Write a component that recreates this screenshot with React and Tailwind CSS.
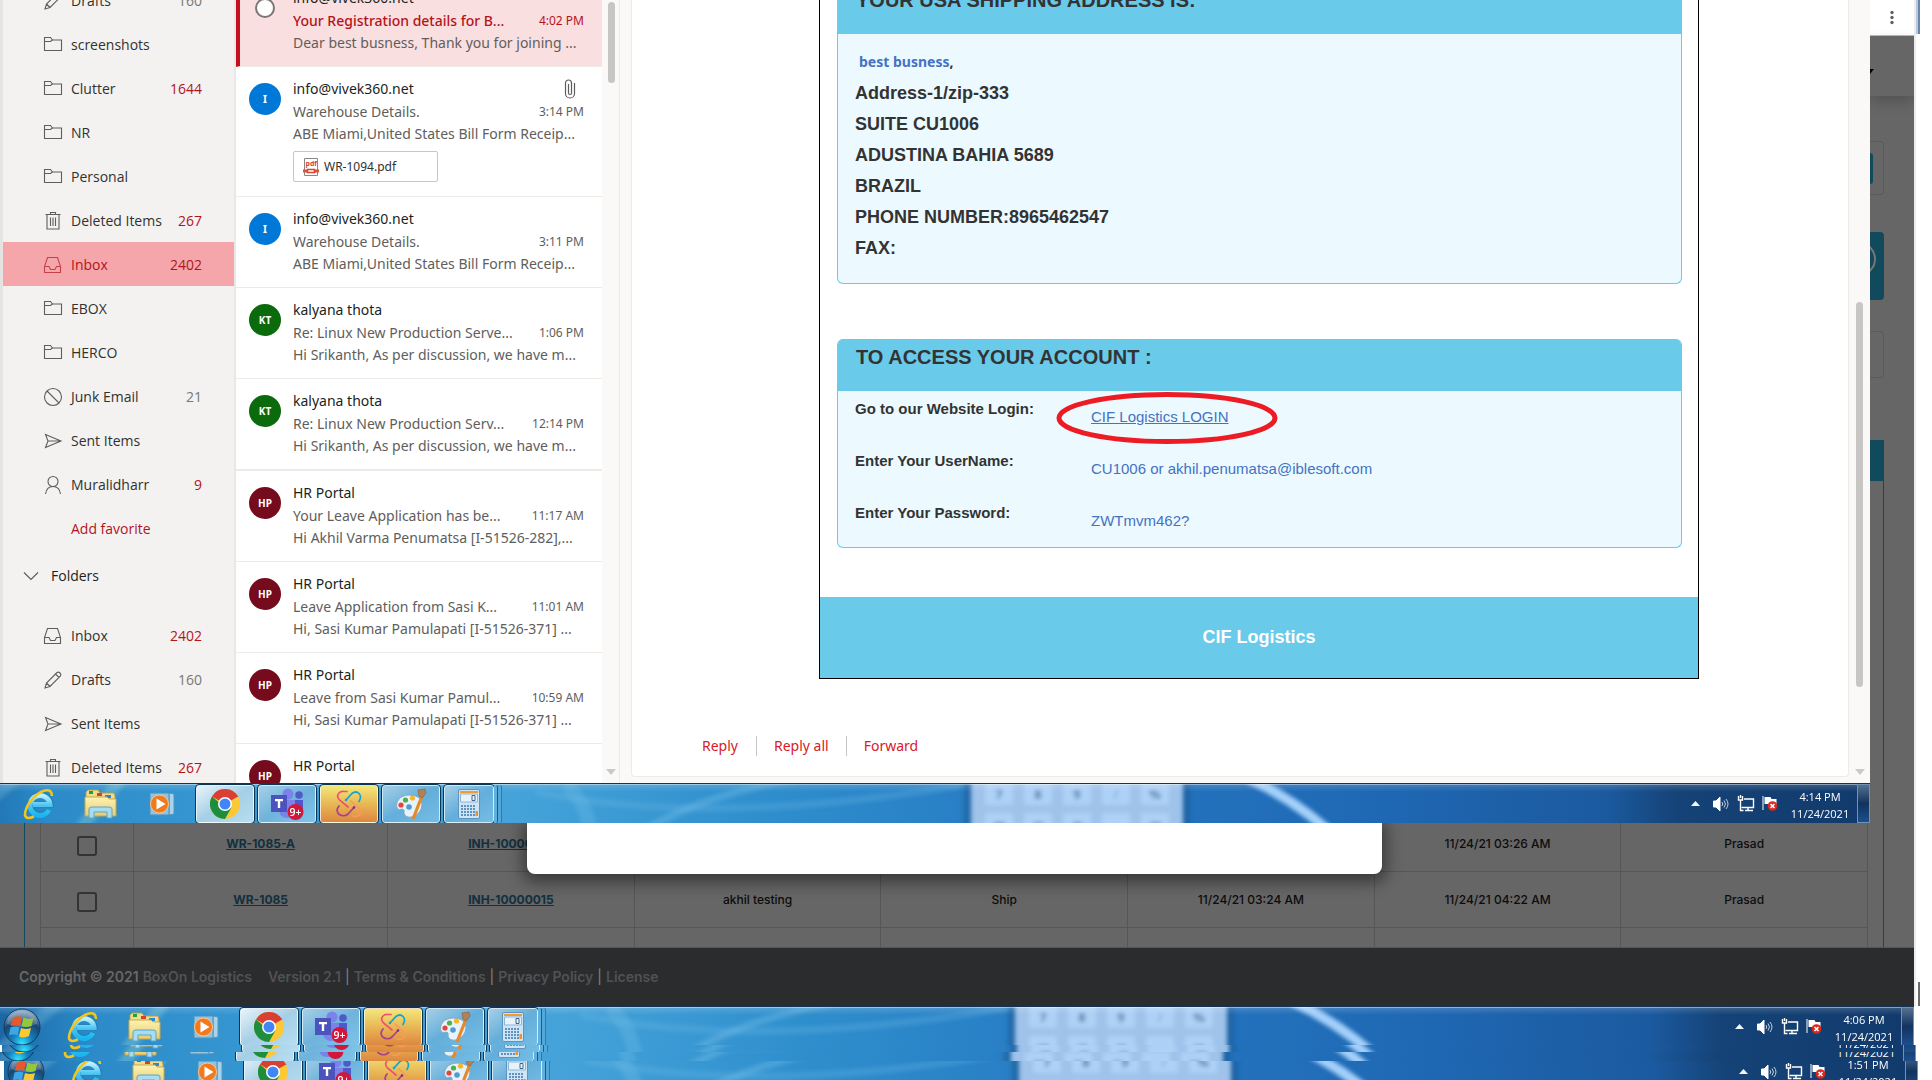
import React from "react";

const UI = "font-['Open_Sans','Noto_Sans',sans-serif]";
const NOTO = "font-['Noto_Sans','Open_Sans',sans-serif]";
const ARIAL = "font-['Liberation_Sans',Arial,sans-serif]";
const GEO = "font-['Inter',sans-serif]";

/* ---------- mailbox icons ---------- */

const line = {
  width: 20,
  height: 20,
  viewBox: "0 0 20 20",
  fill: "none",
  stroke: "currentColor",
  strokeWidth: 1.1,
};

const icons = {
  folder: (
    <svg {...line}>
      <path d="M1.500 15.500V2.500h6l2 2.500h9v10.500z" />
      <path d="M1.500 6.500h6l2-1.500" />
    </svg>
  ),
  pencil: (
    <svg {...line}>
      <path d="M2 18l1.500-5L14 2.500q1.500-1 3 .5t.5 3L7 16.500z M3.500 13l3.500 3.500 M12.500 4l3.500 3.500" />
    </svg>
  ),
  trash: (
    <svg {...line}>
      <path d="M2.500 3.500h15M7.500 3.500v-2h5v2M4 3.500v14.500h12V3.500" />
      <path d="M7.500 6.500v8.500M10 6.500v8.500M12.500 6.500v8.500" />
    </svg>
  ),
  inbox: (
    <svg {...line}>
      <path d="M1.500 17.500v-6l3-9h10l3 9v6z" />
      <path d="M1.500 11.500h4.500l1.500 3h4.500l1.500-3h4" />
    </svg>
  ),
  junk: (
    <svg {...line}>
      <circle cx="10" cy="10" r="8.500" />
      <path d="M4 4l12 12" />
    </svg>
  ),
  sent: (
    <svg {...line}>
      <path d="M2.500 3.500L18 10 2.500 16.500 5 10z M5 10h13" />
    </svg>
  ),
  person: (
    <svg {...line}>
      <circle cx="10" cy="6.500" r="5" />
      <path d="M2.500 19q1-7.500 7.500-7.500t7.500 7.500" />
    </svg>
  ),
};

const favorites = [
  { icon: "pencil", name: "Drafts", count: "160" },
  { icon: "folder", name: "screenshots" },
  { icon: "folder", name: "Clutter", count: "1644", hot: true },
  { icon: "folder", name: "NR" },
  { icon: "folder", name: "Personal" },
  { icon: "trash", name: "Deleted Items", count: "267", hot: true },
  { icon: "inbox", name: "Inbox", count: "2402", hot: true, active: true },
  { icon: "folder", name: "EBOX" },
  { icon: "folder", name: "HERCO" },
  { icon: "junk", name: "Junk Email", count: "21" },
  { icon: "sent", name: "Sent Items" },
  { icon: "person", name: "Muralidharr", count: "9", hot: true },
];

const folders = [
  { icon: "inbox", name: "Inbox", count: "2402", hot: true },
  { icon: "pencil", name: "Drafts", count: "160" },
  { icon: "sent", name: "Sent Items" },
  { icon: "trash", name: "Deleted Items", count: "267", hot: true },
];

function FolderRow({ icon, name, count, hot, active }) {
  return (
    <button
      type="button"
      className={
        "flex h-11 w-full shrink-0 items-center pt-px pl-10 pr-8 text-left text-sm " +
        (active ? "bg-[#f4a6aa] text-[#b3131b]" : "text-[#323130]")
      }
    >
      <span className={active ? "text-[#c4434a]" : "text-[#605e5c]"}>{icons[icon]}</span>
      <span className="ml-2 flex-1 whitespace-nowrap">{name}</span>
      {count && <span className={hot ? "text-[#b3131b]" : "text-[#797775]"}>{count}</span>}
    </button>
  );
}

function Sidebar() {
  return (
    <nav className="flex w-[236px] shrink-0 flex-col overflow-hidden border-l-3 border-r-2 border-l-[#e6e4e2] border-r-[#eae8e6] bg-[#f3f2f1]">
      <div className="-mt-[22px] flex flex-col">
        {favorites.map((f) => (
          <FolderRow key={f.name} {...f} />
        ))}
        <button type="button" className="h-11 pt-px pl-[68px] text-left text-sm text-[#b3131b]">
          Add favorite
        </button>
        <button type="button" className="mb-3 flex h-[51px] items-center gap-3 pl-5 text-left text-sm text-[#201f1e]">
          <svg width="16" height="16" viewBox="0 0 16 16" fill="none" stroke="#605e5c" strokeWidth="1.2">
            <path d="M1 4.500l7 7 7-7" />
          </svg>
          Folders
        </button>
        {folders.map((f) => (
          <FolderRow key={f.name} {...f} />
        ))}
      </div>
    </nav>
  );
}

/* ---------- message list ---------- */

const messages = [
  { who: "info@vivek360.net", subject: "Your Registration details for B...", time: "4:02 PM", body: "Dear best busness, Thank you for joining ...", selected: true },
  { who: "info@vivek360.net", subject: "Warehouse Details.", time: "3:14 PM", body: "ABE Miami,United States Bill Form Receip...", initials: "I", color: "bg-[#0078d7]", file: "WR-1094.pdf" },
  { who: "info@vivek360.net", subject: "Warehouse Details.", time: "3:11 PM", body: "ABE Miami,United States Bill Form Receip...", initials: "I", color: "bg-[#0078d7]" },
  { who: "kalyana thota", subject: "Re: Linux New Production Serve...", time: "1:06 PM", body: "Hi Srikanth, As per discussion, we have m...", initials: "KT", color: "bg-[#0b6a0b]" },
  { who: "kalyana thota", subject: "Re: Linux New Production Serv...", time: "12:14 PM", body: "Hi Srikanth, As per discussion, we have m...", initials: "KT", color: "bg-[#0b6a0b]", last: true },
  { who: "HR Portal", subject: "Your Leave Application has be...", time: "11:17 AM", body: "Hi Akhil Varma Penumatsa [I-51526-282],...", initials: "HP", color: "bg-[#750b1c]" },
  { who: "HR Portal", subject: "Leave Application from Sasi K...", time: "11:01 AM", body: "Hi, Sasi Kumar Pamulapati [I-51526-371] ...", initials: "HP", color: "bg-[#750b1c]" },
  { who: "HR Portal", subject: "Leave from Sasi Kumar Pamul...", time: "10:59 AM", body: "Hi, Sasi Kumar Pamulapati [I-51526-371] ...", initials: "HP", color: "bg-[#750b1c]" },
  { who: "HR Portal", initials: "HP", color: "bg-[#750b1c]" },
];

function Message({ who, subject, time, body, initials, color, file, selected, last }) {
  return (
    <article
      className={
        "flex shrink-0 border-[#edebe9] pr-[18px] " +
        (last ? "border-b-2 " : "border-b ") +
        (selected ? "border-l-4 border-l-[#c50f1f] bg-[#fadfe0] pl-[9px]" : "bg-white pl-[13px]")
      }
    >
      {selected ? (
        <span className="ml-[6px] mt-[22px] mr-[6px] size-5 shrink-0 rounded-full border-2 border-[#797775] bg-white" />
      ) : (
        <span
          className={
            "mt-4 grid size-8 shrink-0 place-items-center rounded-full text-[10px] font-bold text-white " + color
          }
        >
          {initials}
        </span>
      )}
      <div className={"ml-3 min-w-0 flex-1 whitespace-nowrap pt-3 " + (file ? "pb-[14px]" : "pb-3")}>
        <div className="flex h-5 items-center justify-between text-sm text-[#201f1e]">
          <span>{who}</span>
          {file && (
            <svg className="mr-2" width="12" height="20" viewBox="0 0 12 20" fill="none" stroke="#605e5c" strokeWidth="1.2">
              <path d="M10.500 4v10.500a4.500 4.500 0 0 1-9 0V4a3 3 0 0 1 6 0v10a1.500 1.500 0 0 1-3 0V5" />
            </svg>
          )}
        </div>
        <div className={"mt-0.5 flex h-[22px] items-center justify-between text-sm " + (selected ? "text-[#b3131b]" : "text-[#605e5c]")}>
          <span className={selected ? "font-medium" : ""}>{subject}</span>
          <span className="text-xs">{time}</span>
        </div>
        <div className="flex h-[22px] items-center text-sm text-[#605e5c]">{body}</div>
        {file && (
          <button type="button" className="mt-[6px] flex h-[31px] w-[145px] items-center gap-1 rounded-xs border border-[#c8c6c4] pl-2 text-xs text-[#323130]">
            <svg width="18" height="20" viewBox="0 0 18 20" fill="none">
              <path d="M2.500 1.500h13v17h-13z" fill="#fff" stroke="#8a8886" />
              <text x="3.500" y="9" fontSize="7" fontWeight="700" fill="#d8452e">pdf</text>
              <path d="M1 12.500h4v3H1zM13 12.500h4v3h-4z" fill="#d8563e" />
              <path d="M5.500 12.500h7v3h-7z" fill="#fff" stroke="#d8452e" strokeWidth="1.500" />
            </svg>
            {file}
          </button>
        )}
      </div>
    </article>
  );
}

function ScrollArrow() {
  return (
    <svg width="10" height="6" viewBox="0 0 10 6">
      <path d="M0 0h10L5 6z" fill="#c6cacd" />
    </svg>
  );
}

function MessageList() {
  return (
    <>
      <section className={"w-[366px] shrink-0 overflow-hidden bg-white " + NOTO}>
        <div className="-mt-[24px] flex flex-col">
          {messages.map((m, i) => (
            <Message key={i} {...m} />
          ))}
        </div>
      </section>
      <div className="flex w-[18px] shrink-0 flex-col items-center justify-between border-r border-[#edebe9] bg-[#faf9f8] pb-2 pl-px pt-[2px]">
        <div className="h-[81px] w-[7px] rounded-full bg-[#c8c6c4]" />
        <ScrollArrow />
      </div>
    </>
  );
}

/* ---------- reading pane ---------- */

const credentials = [
  ["Enter Your UserName:", "CU1006 or akhil.penumatsa@iblesoft.com"],
  ["Enter Your Password:", "ZWTmvm462?"],
];

function CardTitle({ children }) {
  return <h2 className="h-[52px] bg-[#6acaea] pl-[18px] pt-[6px] text-xl leading-6 font-bold text-[#333]">{children}</h2>;
}

function ReadingPane() {
  return (
    <section className="flex min-w-0 flex-1 bg-[#faf9f8] pl-[11px]">
      <div className="mb-[6px] min-w-0 flex-1 overflow-hidden rounded-b-sm border border-t-0 border-[#edebe9] bg-white">
        <div className={"ml-[187px] mr-[149px] border border-t-0 border-black " + ARIAL}>
          <div className="mr-4 ml-[17px] -mt-[18px] overflow-hidden rounded-md border border-t-0 border-[#6acaea] bg-[#ecfaff]">
            <CardTitle>YOUR USA SHIPPING ADDRESS IS:</CardTitle>
            <div className="px-[17px] pb-[19px] pt-3 text-lg leading-[31px] font-bold text-[#333]">
              <p className={"pl-1 text-sm leading-8 text-[#4472c4] " + NOTO}>
                best busness<span className="text-[#333]">,</span>
              </p>
              <p>Address-1/zip-333</p>
              <p>SUITE CU1006</p>
              <p>ADUSTINA BAHIA 5689</p>
              <p>BRAZIL</p>
              <p>PHONE NUMBER:8965462547</p>
              <p>FAX:</p>
            </div>
          </div>
          <div className="mr-4 ml-[17px] mt-[55px] overflow-hidden rounded-md border border-t-0 border-[#6acaea] bg-[#ecfaff]">
            <CardTitle>TO ACCESS YOUR ACCOUNT :</CardTitle>
            <dl className="grid grid-cols-[236px_1fr] pl-[17px] text-[15px] leading-6">
              <dt className="h-[52px] pt-[6px] font-bold text-[#333]">Go to our Website Login:</dt>
              <dd className="relative pt-[14px] text-[#4472c4]">
                <a href="#login" className="underline">CIF Logistics LOGIN</a>
                <svg className="absolute -left-[35px] top-px" width="222" height="52" viewBox="0 0 222 52" fill="none">
                  <ellipse cx="111" cy="26" rx="108" ry="23.500" stroke="#ed1c24" strokeWidth="5" />
                </svg>
              </dd>
              {credentials.map(([k, v]) => (
                <React.Fragment key={k}>
                  <dt className="h-[52px] pt-[6px] font-bold text-[#333]">{k}</dt>
                  <dd className="pt-[14px] text-[#4472c4]">{v}</dd>
                </React.Fragment>
              ))}
            </dl>
          </div>
          <div className="mt-[49px] grid h-[81px] place-items-center bg-[#6acaea] pb-px text-lg font-bold text-white">CIF Logistics</div>
        </div>
        <div className={"ml-[70px] mt-[57px] flex items-center text-sm text-[#d6202a] " + NOTO}>
          <button type="button" className="pr-[18px]">Reply</button>
          <button type="button" className="border-l border-[#c8c6c4] px-[17px]">Reply all</button>
          <button type="button" className="border-l border-[#c8c6c4] px-[17px]">Forward</button>
        </div>
      </div>
      <div className="flex w-[21px] shrink-0 flex-col items-center justify-between pb-2 pt-[302px]">
        <div className="h-[385px] w-[7px] rounded-full bg-[#c8c6c4]" />
        <ScrollArrow />
      </div>
    </section>
  );
}

/* ---------- sliver of the browser behind the mail window ---------- */

function BackdropEdge() {
  return (
    <div className="flex w-11 shrink-0 flex-col overflow-hidden bg-[#666]">
      <div className="flex h-9 shrink-0 items-center justify-center border-b border-[#bbb] bg-white">
        <svg width="4" height="16" viewBox="0 0 4 16" fill="#5f6368">
          <circle cx="2" cy="2.500" r="1.700" />
          <circle cx="2" cy="7.500" r="1.700" />
          <circle cx="2" cy="12.500" r="1.700" />
        </svg>
      </div>
      <div className="h-[60px] shrink-0 pt-[33px] shadow-[0_6px_14px_rgba(0,0,0,0.18)]">
        <svg width="4" height="5" viewBox="0 0 4 5">
          <path d="M0 0h4L0 5z" fill="#000" />
        </svg>
      </div>
      <div className="mt-[45px] mr-[30px] h-[54px] shrink-0 rounded-r-sm border border-l-0 border-[#5b5b5b] pt-[11px]">
        <div className="h-[31px] w-[3px] rounded-r-sm bg-[#104a5c]" />
      </div>
      <div className="mt-[37px] mr-[30px] h-[68px] shrink-0 overflow-hidden rounded-r-sm bg-[#104a5c]">
        <svg width="14" height="68" viewBox="0 0 14 68" fill="none">
          <circle cx="-11" cy="27" r="16" stroke="#777" strokeWidth="2" />
        </svg>
      </div>
      <div className="mt-[31px] mr-[30px] h-[47px] shrink-0 rounded-r-sm border border-l-0 border-[#5b5b5b]" />
      <div className="mt-[62px] mr-[30px] h-[41px] shrink-0 bg-[#104a5c]" />
      <div className="mr-[30px] flex-1 border-r border-[#104a5c]" />
    </div>
  );
}

/* ---------- taskbar ---------- */

function Defs() {
  return (
    <svg width="0" height="0" className="absolute" aria-hidden="true">
      <defs>
        <filter id="soft" x="-10%" y="-20%" width="120%" height="140%">
          <feGaussianBlur stdDeviation="2.500" />
        </filter>
        <filter id="soft1">
          <feGaussianBlur stdDeviation="2" />
        </filter>
        <linearGradient id="paper" x1="0" y1="0" x2="0" y2="1">
          <stop offset="0" stopColor="#fdf3b4" />
          <stop offset="1" stopColor="#e9cd6b" />
        </linearGradient>
        <radialGradient id="orb" cx=".5" cy=".95" r=".95">
          <stop offset="0" stopColor="#2fe3ff" />
          <stop offset=".3" stopColor="#1580bd" />
          <stop offset=".65" stopColor="#1a4570" />
          <stop offset="1" stopColor="#9dbcd4" />
        </radialGradient>
        <linearGradient id="ie" x1="0" y1="0" x2="0" y2="1">
          <stop offset="0" stopColor="#bdf1fd" />
          <stop offset=".5" stopColor="#4cc5f0" />
          <stop offset="1" stopColor="#19b5ee" />
        </linearGradient>
      </defs>
    </svg>
  );
}

const StartOrb = () => (
  <svg width="38" height="38" viewBox="0 0 38 38">
    <circle cx="19" cy="19" r="18" fill="url(#orb)" stroke="#0f3d63" />
    <path d="M4 16a15 13 0 0 1 30 0q-15 6-30 0z" fill="#fff" opacity=".2" />
    <path d="M10 10q4-3 9-1l-2 9q-4-2-9 0z" fill="#e8582b" />
    <path d="M20.500 9.500q5 2.500 10 .5l-2 8q-5 2-10 0z" fill="#93c83d" />
    <path d="M7.500 19.500q5-2 9 0l-2 8q-4-2-8.500 0z" fill="#3ea5e6" />
    <path d="M18 20q5 2 10 0l-2 8q-5 2.500-10 .5z" fill="#fcc931" />
  </svg>
);

const IeIcon = () => (
  <svg width="32" height="34" viewBox="0 0 32 34" fill="none">
    <path d="M26 23A10 10 0 1 1 27.500 17.500H10" stroke="#2184bd" strokeWidth="6.500" />
    <path d="M26 23A10 10 0 1 1 27 17.500H10" stroke="url(#ie)" strokeWidth="5" />
    <path d="M29 9q0-7-7-5.500C12 6 2 19 2 28q1 5 9 1.500" stroke="#f3c51c" strokeWidth="2.600" />
  </svg>
);

const ExplorerIcon = () => (
  <svg width="34" height="30" viewBox="0 0 34 30">
    <path d="M2 3l2-2h10l2 3h14l1 3v19H2z" fill="#f1dc8c" stroke="#b99a48" />
    <path d="M5 2h4v3H5z" fill="#19a33b" />
    <path d="M13 4h5v3h-5z" fill="#d9402a" />
    <path d="M21 6h6v3h-6z" fill="#2c86d6" />
    <path d="M1 8h22l2 2h7v17H1z" fill="url(#paper)" stroke="#c8a850" />
    <path d="M5 29v-9q0-2 3-2h17q3 0 3 2v9h-5v-6H10v6z" fill="#a8dcf3" stroke="#5aa6cc" />
  </svg>
);

const MediaIcon = () => (
  <svg width="28" height="26" viewBox="0 0 28 26">
    <path d="M20 2l5 1v20l-5 1z" fill="#a7d3ec" stroke="#5596bf" />
    <path d="M1 2h19v22H1z" fill="#8cc4e6" stroke="#4f90b9" />
    <circle cx="10.500" cy="13" r="9" fill="#f07a1c" stroke="#ffc48a" />
    <path d="M7.500 7.500v11l9-5.500z" fill="#fff" />
  </svg>
);

const ChromeIcon = () => (
  <svg width="30" height="30" viewBox="0 0 30 30">
    <circle cx="15" cy="15" r="15" fill="#fcc934" />
    <path d="M15 15L2 7.500A15 15 0 0 1 28 7.500z" fill="#d93f35" />
    <path d="M2 7.500A15 15 0 0 0 15 30l6.500-11.500H15z" fill="#1e8e3e" />
    <path d="M15 8h13.200a15 15 0 0 0-3-4z" fill="#d93f35" />
    <circle cx="15" cy="15" r="7" fill="#fff" />
    <circle cx="15" cy="15" r="5.500" fill="#4285f4" />
  </svg>
);

const TeamsIcon = ({ plain }) => (
  <svg width="34" height="32" viewBox="0 0 34 32">
    <circle cx="18" cy="6" r="5.500" fill="#7b83eb" />
    <circle cx="29" cy="7" r="3.800" fill="#5059c9" />
    <path d="M24 12h9v10q0 4-5 5h-4z" fill="#5059c9" />
    <path d="M9 12h16v11q-1 7-8 7t-8-7z" fill="#7b83eb" />
    <path d="M1 7h16v17H1z" fill="#4b53bc" />
    <path d="M5 11h8v2.200H10.200V20H7.800v-6.800H5z" fill="#fff" />
    <circle cx="25.500" cy="24" r="8" fill="#d0173c" />
    {!plain && (
      <text x="25.500" y="28" fontSize="10.500" fontWeight="600" fill="#fff" textAnchor="middle" fontFamily="Open Sans">9+</text>
    )}
  </svg>
);

const LoopIcon = () => (
  <svg width="28" height="28" viewBox="0 0 28 28" fill="none" strokeWidth="1.700" strokeLinecap="round">
    <path d="M13 17L4.500 10Q1 6 4 3q2-2 5-1.500h3" stroke="#f0506e" />
    <path d="M11 10l6-6.500q4-3 7 0 3 3 0 8" stroke="#12a5cf" />
    <path d="M19 17.500l-6 6.500q-4 3.500-9.500 0-3-4 .5-8" stroke="#a3418c" />
    <path d="M16 11l7.500 7q4 4 1 7-2 2-7 1" stroke="#f79a5b" />
    <circle cx="11" cy="10" r="1.300" fill="#12a5cf" />
    <circle cx="19" cy="17.500" r="1.300" fill="#7c2f86" />
  </svg>
);

const PaintIcon = () => (
  <svg width="34" height="32" viewBox="0 0 34 32">
    <path d="M15 7C6 7 1 14 3 20q2 3 5 1 3 0 2 4 1 5 8 4 9-3 10-12Q28 7 15 7z" fill="#e8f2fa" stroke="#84a9c6" />
    <circle cx="7" cy="17" r="2.600" fill="#e2453a" />
    <circle cx="11.500" cy="12" r="2.600" fill="#4fb04a" />
    <circle cx="18.500" cy="10" r="2.600" fill="#f6b72b" />
    <circle cx="15" cy="19" r="2.800" fill="#4d9cd2" />
    <path d="M28 8L19 31" stroke="#e58a2b" strokeWidth="3.200" />
    <path d="M24 2l7-1 1 4-4 5-3-2z" fill="#b48156" stroke="#8a5c38" strokeWidth=".6" />
  </svg>
);

const CalculatorIcon = () => (
  <svg width="22" height="30" viewBox="0 0 22 30">
    <rect x=".5" y=".5" width="21" height="29" rx="1.500" fill="#cfe4f5" stroke="#5b93c2" />
    <path d="M2 2h18v2H2z" fill="#f29a2e" />
    <path d="M2.500 5h17v8h-17z" fill="#e7f2fa" stroke="#8fb5d3" />
    <path d="M14 6.500h3v5h-3z" fill="none" stroke="#3c678c" />
    {[16, 19, 22, 25].map((y) =>
      [3, 6, 9, 12, 15].map((x) => <rect key={x + "-" + y} x={x} y={y} width="2" height="2" fill="#5e93bf" />)
    )}
    <rect x="17.500" y="22" width="2.500" height="5" fill="#f0902a" />
  </svg>
);

function Wallpaper({ plain }) {
  return (
    <svg className="absolute inset-0" width="1420" height="40" viewBox="0 0 1420 40" fill="none" aria-hidden="true">
      <g filter="url(#soft1)">
        <path d="M60 -5L-10 50" stroke="#9dd2ef" strokeWidth="12" opacity=".25" />
        <path d="M165 -5L120 50" stroke="#a6e0d8" strokeWidth="12" opacity=".3" />
        <path d="M610 0q20 20 24 44" stroke="#8fd0ef" strokeWidth="14" opacity=".2" />
        <path d="M580 8q180 36 430-8" stroke="#6fbce6" strokeWidth="7" opacity=".28" />
        <path d="M690 45q60-35 150-50" stroke="#8fd0f2" strokeWidth="7" opacity=".28" />
      </g>
      <rect x="1008" y="-10" width="226" height="60" fill="#1d5a94" opacity=".6" filter="url(#soft)" />
      <rect x="1015" y="-10" width="212" height="60" rx="3" fill="#9fc3ea" filter="url(#soft1)" />
      <g filter="url(#soft1)">
        {[1029, 1068, 1107, 1146, 1185].map((x) => (
          <g key={x} fill="#aed1f6">
            <rect x={x} y="-4" width="28" height="25" rx="2" />
            <rect x={x} y="29" width="28" height="20" rx="2" />
          </g>
        ))}
        {!plain && (
          <g fill="#4c74a6" fontSize="13" fontWeight="700" fontFamily="Open Sans" textAnchor="middle">
            <text x="1043" y="15">7</text>
            <text x="1082" y="15">8</text>
            <text x="1121" y="15">9</text>
            <text x="1160" y="15" opacity=".4">/</text>
            <text x="1199" y="15">%</text>
          </g>
        )}
        <path d="M1038 40h11M1078 40h9M1117 40h9M1194 40h11" stroke="#6f97c6" strokeWidth="4" />
        <path d="M1292 -6Q1335 14 1372 46" stroke="#a4d0fa" strokeWidth="10" />
      </g>
    </svg>
  );
}

function TaskButton({ label, tone, children }) {
  return (
    <button
      type="button"
      aria-label={label}
      className={
        "grid h-[38px] w-[58px] place-items-center rounded-[3px] border border-white/70 outline outline-[#0c3553] " + tone
      }
    >
      {children}
    </button>
  );
}

function Tray({ time, plain }) {
  return (
    <div className="relative ml-auto flex h-full items-center">
      <svg width="9" height="5" viewBox="0 0 9 5">
        <path d="M0 5l4.500-5L9 5z" fill="#f3f6fa" />
      </svg>
      <svg className="ml-[13px]" width="16" height="16" viewBox="0 0 16 16" fill="none" stroke="#fff">
        <path d="M.500 5v6h2.500l4 4V1L3 5z" fill="#fff" />
        <path d="M9 6q1.500 2 0 4M11 4.500q3 3.500 0 7M13 3q4 5 0 10" strokeWidth="1" opacity=".75" />
      </svg>
      <svg className="ml-2" width="18" height="17" viewBox="0 0 18 17" fill="none" stroke="#fff" strokeWidth="1.400">
        <path d="M7 4h9.500v8.500h-12" />
        <path d="M1.500 1v4h4V1M3.500 0v3M3.500 5v10.500h3M8 15.500h8M11 13v2" />
      </svg>
      <svg className="ml-[7px]" width="16" height="17" viewBox="0 0 16 17">
        <path d="M.500 1h1v14h-1z" fill="#fff" />
        <path d="M2.500 2h6l1 2h5v6h-6l-1-1h-5z" fill="#fff" />
        <circle cx="10.500" cy="11" r="4.800" fill="#d9281e" />
        <path d="M8.500 9l4 4M12.500 9l-4 4" stroke="#fff" strokeWidth="1.600" />
      </svg>
      <div className="ml-[11px] flex h-full w-[62px] flex-col pt-1 text-center text-[11px] leading-[17px] text-white">
        {!plain && <span>{time}</span>}
        <span className={plain ? "mt-[17px]" : ""}>11/24/2021</span>
      </div>
      <button
        type="button"
        aria-label="Show desktop"
        className="ml-[6px] h-[39px] w-[13px] self-start border border-[#6d93bb] bg-linear-to-b from-[#56718f] via-[#12335f] to-[#1d4f8c]"
      />
    </div>
  );
}

function Taskbar({ time, plain, className = "" }) {
  return (
    <div
      className={
        "relative flex h-10 items-center overflow-hidden border-t border-[#123456] bg-[linear-gradient(90deg,#1a68a6_0px,#2c8ac8_90px,#3597d2_250px,#45a3d9_560px,#2f8fcd_800px,#2678c2_1100px,#1f68b4_1420px,#1b5a9f_1650px,#154377_1720px,#123a6c_1914px)] " +
        UI + " " + className
      }
    >
      <Wallpaper plain={plain} />
      <div className="absolute inset-x-0 top-0 h-2 border-t border-white/50 bg-linear-to-b from-white/15 to-transparent" />
      <div className="relative flex h-full items-center">
        <button type="button" aria-label="Start" className="mr-2 grid w-11 place-items-center"><StartOrb /></button>
        <button type="button" aria-label="Internet Explorer" className="grid w-[62px] place-items-center"><IeIcon /></button>
        <button type="button" aria-label="Explorer" className="grid w-[62px] place-items-center"><ExplorerIcon /></button>
        <button type="button" aria-label="Media Player" className="mr-[2px] grid w-[62px] place-items-center"><MediaIcon /></button>
        <div className="flex gap-1">
          <TaskButton label="Chrome" tone="bg-linear-to-br from-[#e9f4fa] via-[#a5cfe6] to-[#b7def1]"><ChromeIcon /></TaskButton>
          <TaskButton label="Teams" tone="bg-linear-to-br from-[#a5cfe6] via-[#6fb3dc] to-[#7fc4e8]"><TeamsIcon plain={plain} /></TaskButton>
          <TaskButton label="Snip" tone="bg-linear-to-b from-[#f1e77a] via-[#e9b755] to-[#dd8740]"><LoopIcon /></TaskButton>
          <TaskButton label="Paint" tone="bg-linear-to-br from-[#a5cfe6] via-[#63aeda] to-[#74bde5]"><PaintIcon /></TaskButton>
          <div className="flex">
            <button
              type="button"
              aria-label="Calculator"
              className="grid h-[38px] w-[50px] place-items-center rounded-[3px] border border-white/70 bg-linear-to-br from-[#a5cfe6] via-[#63aeda] to-[#74bde5] outline outline-[#0c3553]"
            >
              <CalculatorIcon />
            </button>
            <span className="h-[38px] w-1 rounded-r-xs border-r border-[#1d5b86] bg-[#5fb0dc]" />
            <span className="h-[38px] w-1 rounded-r-xs border-r border-[#2f7aab] bg-[#52a8d9]" />
          </div>
        </div>
      </div>
      <Tray time={time} plain={plain} />
    </div>
  );
}

/* ---------- dimmed warehouse table ---------- */

const rows = [
  ["WR-1085-A", "INH-10000015", "akhil testing", "Ship", "11/24/21 03:25 AM", "11/24/21 03:26 AM", "Prasad"],
  ["WR-1085", "INH-10000015", "akhil testing", "Ship", "11/24/21 03:24 AM", "11/24/21 04:22 AM", "Prasad"],
];

function WarehouseTable() {
  return (
    <div className={"relative h-[124px] shrink-0 bg-[#666] pl-6 pr-[30px] " + GEO}>
      <div className="h-full overflow-hidden border-x border-[#104a5c] pl-[15px] pr-[15px]">
        <table className="-mt-2 w-full table-fixed border-collapse text-center text-xs font-medium text-[#0c0c0c]">
          <colgroup>
            <col className="w-[5.1%]" />
            <col className="w-[13.9%]" />
            <col className="w-[13.5%]" />
            <col className="w-[13.5%]" />
            <col className="w-[13.5%]" />
            <col className="w-[13.5%]" />
            <col className="w-[13.5%]" />
            <col className="w-[13.5%]" />
          </colgroup>
          <tbody>
            {rows.map((r) => (
              <tr key={r[0]} className="h-14">
                <td className="border border-[#565656] pt-1">
                  <input
                    type="checkbox"
                    aria-label={"Select " + r[0]}
                    className="size-5 appearance-none rounded-[3px] border-2 border-[#333] align-middle"
                  />
                </td>
                {r.map((c, i) => (
                  <td key={i} className="border border-[#565656]">
                    {i < 2 ? <a href={"#" + c} className="font-bold text-[#12303f] underline">{c}</a> : c}
                  </td>
                ))}
              </tr>
            ))}
            <tr className="h-14">
              {Array.from({ length: 8 }, (_, i) => (
                <td key={i} className="border border-[#565656]" />
              ))}
            </tr>
          </tbody>
        </table>
      </div>
      <div className="pointer-events-none absolute inset-0 overflow-hidden">
        <div className="ml-[527px] mr-[532px] h-[51px] rounded-b-lg bg-white shadow-[0_4px_16px_4px_rgba(0,0,0,0.45)]" />
      </div>
    </div>
  );
}

function PageFooter() {
  return (
    <footer className={"flex h-[59px] shrink-0 items-center border-t border-[#555] bg-[#2b2c2e] pl-[19px] text-sm font-semibold text-[#515254] " + GEO}>
      <span className="text-[#67686a]">Copyright © 2021</span>
      <span className="ml-1">BoxOn Logistics</span>
      <span className="ml-4">Version 2.1</span>
      <span className="mx-1 font-normal text-[#858585]">|</span>
      <a href="#terms">Terms &amp; Conditions</a>
      <span className="mx-1 font-normal text-[#858585]">|</span>
      <a href="#privacy">Privacy Policy</a>
      <span className="mx-1 font-normal text-[#858585]">|</span>
      <a href="#license">License</a>
    </footer>
  );
}

export default function App() {
  return (
    <main className={"flex h-screen flex-col overflow-hidden bg-white " + UI}>
      <Defs />
      <div className="flex min-h-0 flex-1">
        <div className="flex min-w-0 flex-1 flex-col">
          <div className="flex min-h-0 flex-1">
            <div className="flex min-w-0 flex-1 flex-col">
              <div className="flex min-h-0 flex-1">
                <Sidebar />
                <MessageList />
                <ReadingPane />
              </div>
              <div className="shrink-0 overflow-hidden">
                <Taskbar time="4:14 PM" className="-ml-11" />
              </div>
            </div>
            <BackdropEdge />
          </div>
          <WarehouseTable />
          <PageFooter />
        </div>
        <div className="flex w-[18px] shrink-0 border-l-2 border-[#ededed]">
          <div className="flex w-1 flex-col justify-between">
            <div className="h-[34px] border-r-2 border-[#6d87a8] bg-[#b7c8e0]" />
            <div className="h-6 border-r-2 border-[#6a6a6a]" />
          </div>
        </div>
      </div>
      <div className="h-[39px] shrink-0 overflow-hidden pr-[18px]">
        <Taskbar time="4:06 PM" />
      </div>
      <div className="h-[7px] shrink-0 overflow-hidden pr-4">
        <Taskbar plain className="-mt-8 ml-[2px]" />
      </div>
      <div className="h-[9px] shrink-0 overflow-hidden pr-4">
        <Taskbar plain className="-mt-[30px] -ml-1" />
      </div>
      <div className="h-[19px] shrink-0 overflow-hidden pr-[14px]">
        <Taskbar time="1:51 PM" className="-mt-[10px] ml-1" />
      </div>
    </main>
  );
}
